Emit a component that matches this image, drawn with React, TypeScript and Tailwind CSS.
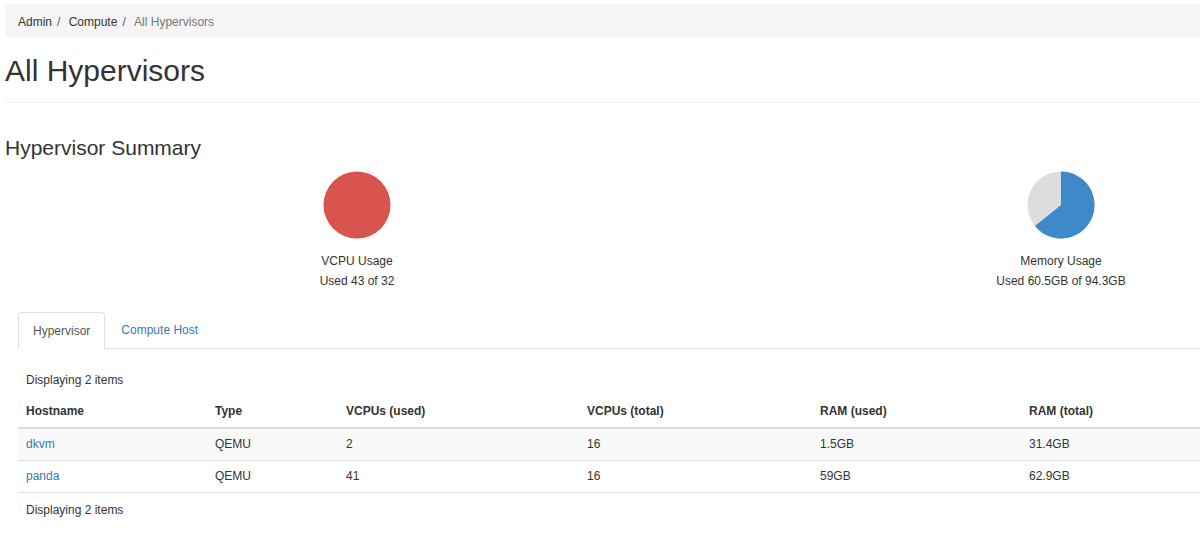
const rows = [
  { host: "dkvm", type: "QEMU", vcpuUsed: "2", vcpuTotal: "16", ramUsed: "1.5GB", ramTotal: "31.4GB" },
  { host: "panda", type: "QEMU", vcpuUsed: "41", vcpuTotal: "16", ramUsed: "59GB", ramTotal: "62.9GB" },
];

const headers = ["Hostname", "Type", "VCPUs (used)", "VCPUs (total)", "RAM (used)", "RAM (total)"];

const gridCols = "grid grid-cols-[189px_131px_241px_233px_209px_1fr]";

function Pie({ used, total, color }: { used: number; total: number; color: string }) {
  const r = 33.5;
  const c = 34;
  const frac = Math.min(used / total, 1);

  if (frac >= 1) {
    return (
      <svg width="68" height="68" viewBox="0 0 68 68">
        <circle cx={c} cy={c} r={r} fill={color} />
      </svg>
    );
  }

  const angle = frac * Math.PI * 2;
  const x = c + r * Math.sin(angle);
  const y = c - r * Math.cos(angle);
  const large = frac > 0.5 ? 1 : 0;

  return (
    <svg width="68" height="68" viewBox="0 0 68 68">
      <circle cx={c} cy={c} r={r} fill="#dddddd" />
      <path d={`M${c} ${c} L${c} ${c - r} A${r} ${r} 0 ${large} 1 ${x} ${y} Z`} fill={color} />
    </svg>
  );
}

function Chart({
  title,
  caption,
  used,
  total,
  color,
}: {
  title: string;
  caption: string;
  used: number;
  total: number;
  color: string;
}) {
  return (
    <div className="flex flex-col items-center">
      <Pie used={used} total={total} color={color} />
      <div className="mt-[12px] text-center text-[12px] leading-[20px] text-[#333]">
        <div>{title}</div>
        <div>{caption}</div>
      </div>
    </div>
  );
}

export default function App() {
  return (
    <div
      className="h-[541px] w-full overflow-hidden bg-white text-[#333]"
      style={{ fontFamily: '"Liberation Sans", Arial, sans-serif' }}
    >
      <div className="w-[1413px] pl-[5px]">
        <nav className="mt-[4px] flex h-[33px] items-center rounded-[4px] bg-[#f5f5f5] px-[13px] pt-[2px] text-[12px]">
          <span>Admin</span>
          <span className="px-[5px] text-[#555]">/&nbsp;</span>
          <span>Compute</span>
          <span className="px-[5px] text-[#555]">/&nbsp;</span>
          <span className="text-[#777]">All Hypervisors</span>
        </nav>

        <div className="mt-[17px] border-b border-[#eee] pb-[15px]">
          <h1 className="text-[30px] leading-[33px] font-normal">All Hypervisors</h1>
        </div>

        <h2 className="mt-[33px] text-[21px] leading-[23px] font-normal">Hypervisor Summary</h2>

        <div className="mt-[12px] grid grid-cols-2">
          <Chart title="VCPU Usage" caption="Used 43 of 32" used={43} total={32} color="#d9534f" />
          <Chart title="Memory Usage" caption="Used 60.5GB of 94.3GB" used={60.5} total={94.3} color="#3d89c9" />
        </div>

        <div className="mt-[21px] px-[13px] text-[12px]">
          <div className="flex border-b border-[#ddd]">
            <div className="-mb-px rounded-t-[4px] border border-b-0 border-[#ddd] bg-white px-[14px] py-[10px] leading-[16px] text-[#555]">
              Hypervisor
            </div>
            <div className="ml-[2px] px-[14px] py-[10px] leading-[16px] text-[#337ab7]">Compute Host</div>
          </div>

          <div className="mt-[15px]">
            <div className="px-[8px] py-[8px] leading-[16px]">Displaying 2 items</div>
            <div className={`${gridCols} border-b-2 border-[#ddd] font-bold`}>
              {headers.map((h) => (
                <div key={h} className="px-[8px] py-[8px] leading-[15px]">
                  {h}
                </div>
              ))}
            </div>
            {rows.map((row, i) => (
              <div
                key={row.host}
                className={`${gridCols} border-b border-[#ddd] ${i % 2 === 0 ? "bg-[#f9f9f9]" : "bg-white"}`}
              >
                <div className="px-[8px] py-[8px] leading-[15px] text-[#337ab7]">{row.host}</div>
                <div className="px-[8px] py-[8px] leading-[15px]">{row.type}</div>
                <div className="px-[8px] py-[8px] leading-[15px]">{row.vcpuUsed}</div>
                <div className="px-[8px] py-[8px] leading-[15px]">{row.vcpuTotal}</div>
                <div className="px-[8px] py-[8px] leading-[15px]">{row.ramUsed}</div>
                <div className="px-[8px] py-[8px] leading-[15px]">{row.ramTotal}</div>
              </div>
            ))}
            <div className="mt-[2px] px-[8px] py-[8px] leading-[15px]">Displaying 2 items</div>
          </div>
        </div>
      </div>
    </div>
  );
}
